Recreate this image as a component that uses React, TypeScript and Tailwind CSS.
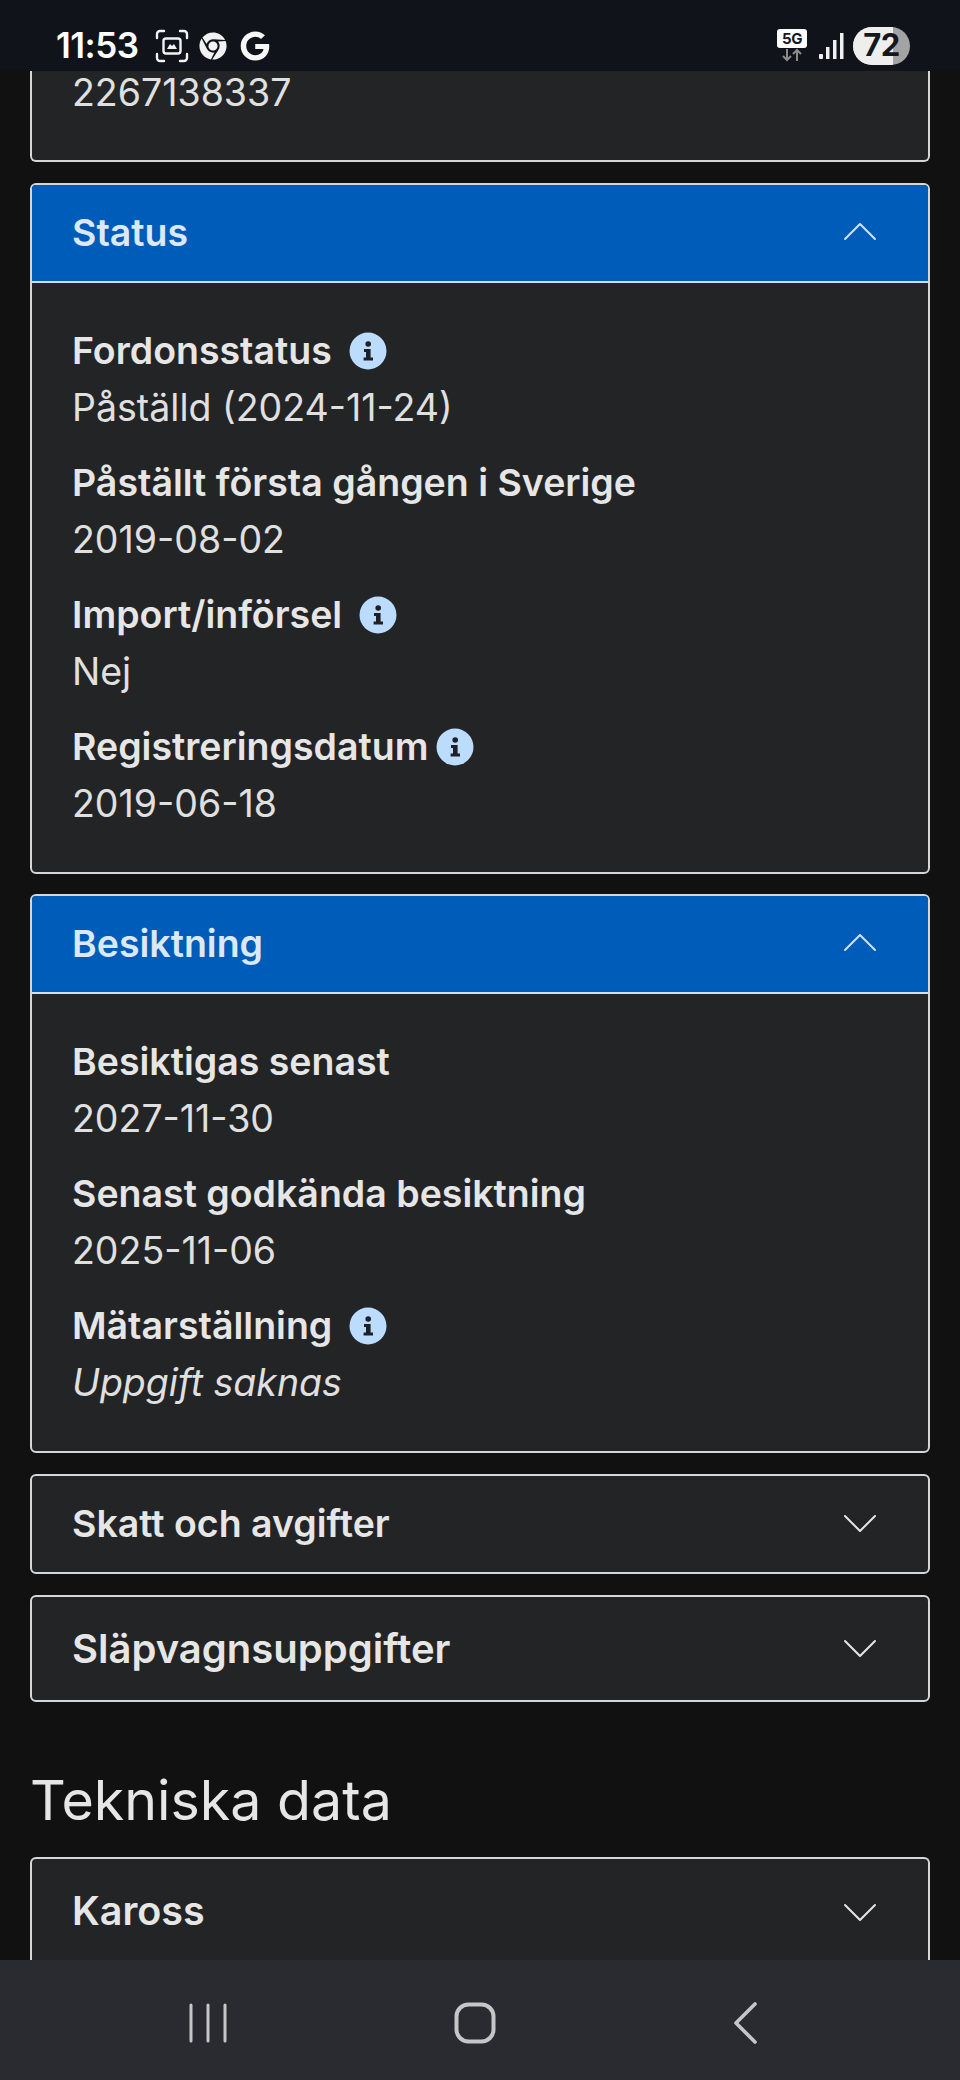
import React from 'react';
import { FaChrome, FaGoogle } from 'react-icons/fa';

const font = { fontFamily: 'Inter, "Liberation Sans", sans-serif' };

function Chevron({ up }: { up?: boolean }) {
  return (
    <svg width="34" height="20" viewBox="0 0 34 20" fill="none" className={`shrink-0 ${up ? 'mb-[4px]' : 'mb-[2px]'}`}>
      <path
        d={up ? 'M2 18L17 3L32 18' : 'M2 3L17 18L32 3'}
        stroke={up ? '#cfe2f5' : '#e6e6e6'}
        strokeWidth="2"
        strokeLinecap="round"
        strokeLinejoin="round"
      />
    </svg>
  );
}

function InfoDot() {
  return (
    <svg width="38" height="38" viewBox="0 0 38 38" className="shrink-0">
      <circle cx="19" cy="19" r="18.5" fill="#bcdcfd" />
      <circle cx="19.2" cy="12" r="2.8" fill="#1d2126" />
      <path d="M15 17h6.6v8.4h2.4v3H14.6v-3H17v-5.400h-2z" fill="#1d2126" />
    </svg>
  );
}

function Field({ label, value, info, gap, italic }: { label: string; value: string; info?: boolean; gap?: string; italic?: boolean }) {
  return (
    <div className="h-[132px]">
      <div className={`flex items-center h-[56px] text-[37.500px] font-semibold text-[#e6e6e6] ${gap || 'gap-[17px]'}`}>
        <span>{label}</span>
        {info && <InfoDot />}
      </div>
      <div className={`h-[58px] flex items-center text-[37.500px] font-normal text-[#e0e0e0] ${italic ? 'italic' : ''}`}>{value}</div>
    </div>
  );
}

function OpenCard({ title, children }: { title: string; children: React.ReactNode }) {
  return (
    <div className="rounded-[6px] border-2 border-[#d4d6d8] bg-[#232425] overflow-hidden">
      <div className="h-[98px] bg-[#005cb9] border-b-2 border-[#d4dfe9] flex items-center justify-between pl-[40px] pr-[51px] text-[37.500px] font-semibold text-[#dce8f5]">
        <span>{title}</span>
        <Chevron up />
      </div>
      <div className="px-[40px] pt-[40px] pb-[21px]">{children}</div>
    </div>
  );
}

function ClosedCard({ title, height, text }: { title: string; height: string; text: string }) {
  return (
    <div className={`rounded-[6px] border-2 border-[#d4d6d8] bg-[#232425] flex items-center justify-between pl-[40px] pr-[51px] font-semibold text-[#e6e6e6] ${height} ${text}`}>
      <span>{title}</span>
      <Chevron />
    </div>
  );
}

export default function App() {
  return (
    <div className="w-[960px] h-[2080px] flex flex-col overflow-hidden bg-[#111111]" style={font}>
      {/* status bar */}
      <div className="h-[71px] shrink-0 bg-[#11131a] flex items-center justify-between pl-[56px] pr-[50px] pt-[20px] text-white">
        <div className="flex items-center">
          <span className="text-[35px] font-semibold tracking-[-0.5px] w-[98px]">11:53</span>
          <svg width="34" height="34" viewBox="0 0 34 34" fill="none" className="ml-[1px]">
            <path d="M9 2H5a3 3 0 0 0-3 3v4M25 2h4a3 3 0 0 1 3 3v4M9 32H5a3 3 0 0 1-3-3v-4M25 32h4a3 3 0 0 0 3-3v-4" stroke="#f2f2f2" strokeWidth="2.400" strokeLinecap="round" />
            <rect x="8.500" y="9.500" width="17" height="15" rx="2.500" stroke="#f2f2f2" strokeWidth="2.400" />
            <path d="M12 20l3-5 2 2 2-2 3 5z" fill="#f2f2f2" />
          </svg>
          <FaChrome className="ml-[10px] text-[28px] text-[#f2f2f2]" />
          <FaGoogle className="ml-[13px] text-[30px] text-[#f7f7f7]" />
        </div>
        <div className="flex items-center">
          <div className="flex flex-col items-center w-[32px] mr-[10px]">
            <div className="w-[30px] h-[19px] rounded-[3px] bg-white text-[#16181d] text-[15px] leading-[19px] font-bold text-center tracking-[-0.5px]">5G</div>
            <svg width="24" height="14" viewBox="0 0 24 14" fill="none">
              <path d="M7 1v11M3 8l4 4 4-4" stroke="#8b8b8b" strokeWidth="2" />
              <path d="M17 13V2M13 6l4-4 4 4" stroke="#8b8b8b" strokeWidth="2" />
            </svg>
          </div>
          <svg width="26" height="26" viewBox="0 0 26 26" className="mr-[9px]">
            <rect x="1" y="21" width="4" height="5" rx="1" fill="#f0f0f0" />
            <rect x="8" y="14" width="3.500" height="12" fill="#f0f0f0" />
            <rect x="15" y="7" width="3.500" height="19" fill="#f0f0f0" />
            <rect x="22" y="0" width="3.500" height="26" fill="#f0f0f0" />
          </svg>
          <div className="relative w-[57px] h-[38px] rounded-full overflow-hidden bg-[#a3a3a3] flex items-center justify-center">
            <div className="absolute left-0 top-0 bottom-0 w-[40px] bg-[#eeeeee]" />
            <span className="relative text-[#15171c] text-[31px] font-bold tracking-[-0.5px]">72</span>
          </div>
        </div>
      </div>

      {/* scrolled content */}
      <div className="flex-1 min-h-0 overflow-hidden px-[30px] flex flex-col text-[#e6e6e6]">
        <div className="h-[91px] shrink-0 rounded-b-[6px] border-2 border-t-0 border-[#d4d6d8] bg-[#232425] pl-[40px] text-[37.500px] text-[#e0e0e0] leading-[44px]">
          2267138337
        </div>

        <div className="mt-[21px]">
          <OpenCard title="Status">
            <Field label="Fordonsstatus" value="Påställd (2024-11-24)" info />
            <Field label="Påställt första gången i Sverige" value="2019-08-02" />
            <Field label="Import/införsel" value="Nej" info />
            <Field label="Registreringsdatum" value="2019-06-18" info gap="gap-[8px]" />
          </OpenCard>
        </div>

        <div className="mt-[20px]">
          <OpenCard title="Besiktning">
            <Field label="Besiktigas senast" value="2027-11-30" />
            <Field label="Senast godkända besiktning" value="2025-11-06" />
            <Field label="Mätarställning" value="Uppgift saknas" info italic />
          </OpenCard>
        </div>

        <div className="mt-[21px]">
          <ClosedCard title="Skatt och avgifter" height="h-[100px]" text="text-[37.500px]" />
        </div>
        <div className="mt-[21px]">
          <ClosedCard title="Släpvagnsuppgifter" height="h-[107px]" text="text-[40px]" />
        </div>

        <h2 className="mt-[66px] text-[55.500px] leading-[64px] font-normal text-[#e6e6e6]">Tekniska data</h2>

        <div className="mt-[25px] h-[200px] shrink-0 rounded-t-[6px] border-2 border-b-0 border-[#d4d6d8] bg-[#232425] flex items-start justify-between pl-[40px] pr-[51px] pt-[23px] text-[39.500px] font-semibold text-[#e6e6e6]">
          <span>Kaross</span>
          <div className="pt-[20px]"><Chevron /></div>
        </div>
      </div>

      {/* android nav bar */}
      <div className="h-[120px] shrink-0 bg-[#2a2b30] flex items-center pl-[188px] pt-[6px]">
        <svg width="40" height="40" viewBox="0 0 40 40" fill="none">
          <path d="M3 2v36M20 2v36M37 2v36" stroke="#c6c6c8" strokeWidth="3" strokeLinecap="round" />
        </svg>
        <svg width="42" height="42" viewBox="0 0 42 42" fill="none" className="ml-[226px]">
          <rect x="2.500" y="2.500" width="37" height="37" rx="12" stroke="#c6c6c8" strokeWidth="4" />
        </svg>
        <svg width="26" height="42" viewBox="0 0 26 42" fill="none" className="ml-[236px]">
          <path d="M23 2L4 21l19 19" stroke="#c6c6c8" strokeWidth="3.600" strokeLinecap="round" strokeLinejoin="round" />
        </svg>
      </div>
    </div>
  );
}
